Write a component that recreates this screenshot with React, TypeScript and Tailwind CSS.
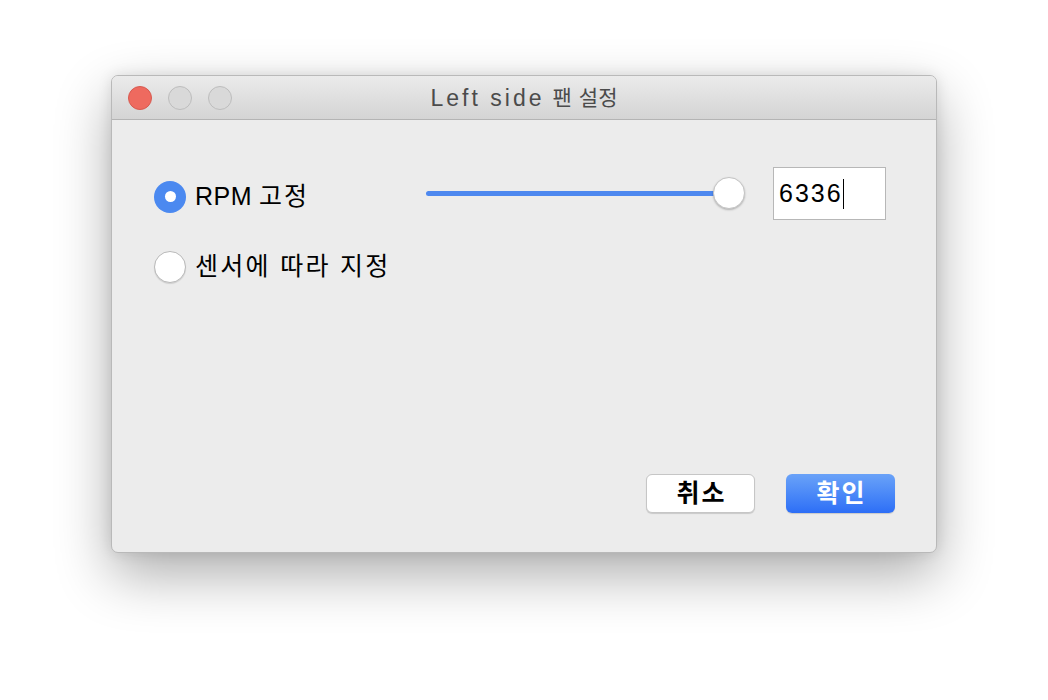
import React from "react";

const font = { fontFamily: '"Liberation Sans", "Noto Sans CJK KR", sans-serif' };

export default function App() {
  return (
    <div className="w-[1048px] h-[700px] bg-white pl-[111px] pt-[75px]" style={font}>
      <div className="w-[826px] h-[478px] rounded-[7px] border border-[#b9b9b9] bg-[#ececec] overflow-hidden flex flex-col shadow-[0_22px_55px_rgba(0,0,0,0.32),0_0_14px_rgba(0,0,0,0.10)]">
        {/* title bar */}
        <div className="relative h-[44px] shrink-0 flex items-center bg-gradient-to-b from-[#ebebeb] to-[#d4d4d4] border-b border-[#b4b4b4]">
          <div className="flex items-center gap-[16px] pl-[16px]">
            <div className="w-[24px] h-[24px] rounded-full bg-[#ee6a5f] border border-[#d75a50]" />
            <div className="w-[24px] h-[24px] rounded-full bg-[#d9d9d9] border border-[#bdbdbd]" />
            <div className="w-[24px] h-[24px] rounded-full bg-[#d9d9d9] border border-[#bdbdbd]" />
          </div>
          <div className="absolute inset-0 flex items-center justify-center text-[#4b4b4b] pointer-events-none pt-[1px]">
            <span className="text-[23px] tracking-[3px]">Left side</span>
            <span className="text-[21px] ml-[8px]">팬</span>
            <span className="text-[21px] ml-[7px]">설정</span>
          </div>
        </div>
        {/* body */}
        <div className="flex-1 flex flex-col pl-[42px] pr-[41px] pt-[47px] pb-[39px]">
          <div className="flex items-center h-[53px]">
            <div className="flex items-center gap-[9px] w-[272px] mt-[6px]">
              <div className="w-[32px] h-[32px] rounded-full bg-[#4b89f0] flex items-center justify-center shrink-0">
                <div className="w-[11px] h-[11px] rounded-full bg-white" />
              </div>
              <span className="text-[25px] text-black whitespace-nowrap">
                <span className="tracking-[0.5px]">RPM</span>{" "}
                <span className="tracking-[2px]">고정</span>
              </span>
            </div>
            <div className="relative w-[319px] h-[34px] mt-[1px]">
              <div className="absolute left-0 top-[14px] w-[304px] h-[5px] rounded-full bg-[#4d88ef]" />
              <div className="absolute left-[287px] top-0 w-[32px] h-[32px] rounded-full bg-white border border-[#c4c4c4] shadow-[0_1px_2px_rgba(0,0,0,0.25)]" />
            </div>
            <div className="ml-[28px] w-[113px] h-[53px] bg-white border border-[#b7b7b7] flex items-center pl-[5px]">
              <span className="text-[25px] text-black leading-none tracking-[2px]">6336</span>
              <span className="w-[1.5px] h-[30px] bg-black" />
            </div>
          </div>
          <div className="flex items-center gap-[9px] mt-[29px] h-[36px]">
            <div className="w-[32px] h-[32px] rounded-full bg-white border border-[#b9b9b9] shadow-[0_1px_1px_rgba(0,0,0,0.12)] shrink-0" />
            <span className="text-[25px] text-black tracking-[2.3px] whitespace-nowrap">센서에 따라 지정</span>
          </div>
          <div className="flex-1" />
          <div className="flex justify-end gap-[31px]">
            <button className="w-[109px] h-[39px] rounded-[6px] bg-white border border-[#c6c6c6] shadow-[0_1px_1px_rgba(0,0,0,0.15)] text-[25px] text-black font-bold tracking-[2px] flex items-center justify-center pl-[2px]">
              취소
            </button>
            <button className="w-[109px] h-[39px] rounded-[6px] bg-gradient-to-b from-[#6aa2f8] to-[#2d6ef6] text-[25px] text-white font-bold tracking-[2px] flex items-center justify-center pl-[2px] shadow-[0_1px_1px_rgba(0,0,0,0.15)]">
              확인
            </button>
          </div>
        </div>
      </div>
    </div>
  );
}
